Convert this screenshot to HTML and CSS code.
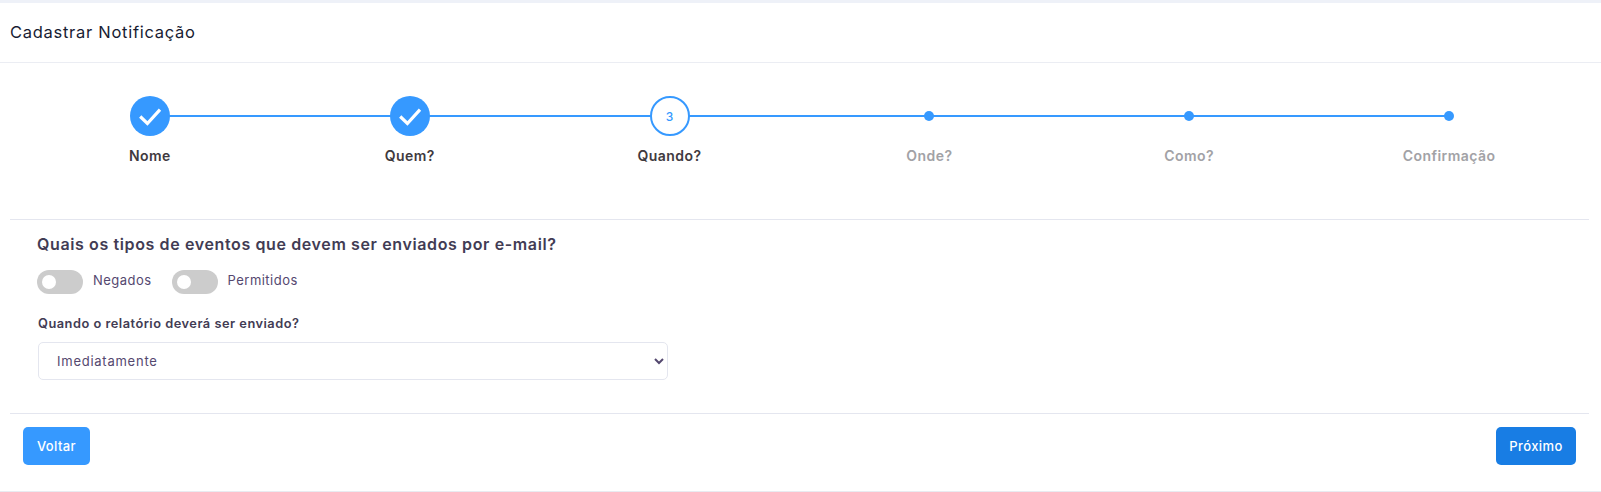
FILE: index.html
```html
<!DOCTYPE html>
<html lang="pt-BR">
<head>
<meta charset="utf-8">
<title>Cadastrar Notificação</title>
<link rel="stylesheet" href="styles.css">
</head>
<body>
<main class="card">
  <header class="card-header"><h1 class="card-title">Cadastrar Notificação</h1></header>
  <section class="card-body">
    <ol class="stepper">
      <li class="step step-done">
        <span class="step-mark"><svg class="check" viewBox="0 0 24 24" width="24" height="24"><path d="M2.2 12.5l7.2 7L22 5.6" fill="none" stroke="#fff" stroke-width="3.2"/></svg></span>
        <span class="step-label">Nome</span>
      </li>
      <li class="step step-done">
        <span class="step-mark"><svg class="check" viewBox="0 0 24 24" width="24" height="24"><path d="M2.2 12.5l7.2 7L22 5.6" fill="none" stroke="#fff" stroke-width="3.2"/></svg></span>
        <span class="step-label">Quem?</span>
      </li>
      <li class="step step-current">
        <span class="step-mark">3</span>
        <span class="step-label">Quando?</span>
      </li>
      <li class="step step-todo">
        <span class="step-mark"><span class="dot"></span></span>
        <span class="step-label">Onde?</span>
      </li>
      <li class="step step-todo">
        <span class="step-mark"><span class="dot"></span></span>
        <span class="step-label">Como?</span>
      </li>
      <li class="step step-todo">
        <span class="step-mark"><span class="dot"></span></span>
        <span class="step-label">Confirmação</span>
      </li>
    </ol>
    <form class="form">
      <h2 class="form-title">Quais os tipos de eventos que devem ser enviados por e-mail?</h2>
      <div class="toggles">
        <label class="toggle"><input type="checkbox"><span class="track"></span><span class="toggle-text">Negados</span></label>
        <label class="toggle"><input type="checkbox"><span class="track"></span><span class="toggle-text">Permitidos</span></label>
      </div>
      <label class="field-label" for="quando">Quando o relatório deverá ser enviado?</label>
      <select class="select" id="quando"><option>Imediatamente</option></select>
    </form>
    <footer class="actions">
      <button type="button" class="btn btn-back">Voltar</button>
      <button type="button" class="btn btn-next">Próximo</button>
    </footer>
  </section>
</main>
</body>
</html>
```
FILE: styles.css
```css
* { box-sizing: border-box; }
html, body { margin: 0; height: 100%; }
body {
  background: #fff;
  border-top: 3px solid #eef1f8;
  font-family: Inter, "Open Sans", sans-serif;
  color: #423c54;
  overflow: hidden;
}
.card { height: 489px; border-bottom: 1px solid #e9ebf1; }
.card-header {
  height: 60px;
  padding: 0 10px 2px;
  display: flex;
  align-items: center;
  border-bottom: 1px solid #ebedf3;
}
.card-title {
  margin: 0;
  font-size: 16.5px;
  font-weight: 400;
  letter-spacing: 0.72px;
  color: #181c32;
}
.card-body { padding: 0 12px 0 10px; }
.stepper {
  list-style: none;
  margin: 0 0 0 10px;
  padding: 33px 0 0;
  width: 1559px;
  height: 156px;
  display: grid;
  grid-template-columns: repeat(6, 1fr);
}
.step {
  position: relative;
  display: flex;
  flex-direction: column;
  align-items: center;
  gap: 10px;
}
.step:not(:last-child)::after {
  content: "";
  position: absolute;
  left: 50%;
  top: 19px;
  width: 100%;
  height: 2px;
  background: #3699ff;
}
.step-mark {
  position: relative;
  z-index: 1;
  width: 40px;
  height: 40px;
  border-radius: 50%;
  display: flex;
  align-items: center;
  justify-content: center;
  font-size: 12px;
  font-weight: 500;
  color: #3699ff;
}
.step-done .step-mark { background: #3699ff; }
.step-current .step-mark { background: #fff; border: 2px solid #3699ff; }
.dot { width: 10px; height: 10px; border-radius: 50%; background: #3699ff; }
.step-label {
  font-size: 14px;
  line-height: 20px;
  font-weight: 600;
  letter-spacing: 0.45px;
  color: #3f3a40;
}
.step-todo .step-label { color: #a2a2a6; }
.form {
  height: 195px;
  padding: 13px 0 0 27px;
  border-top: 1px solid #e4e6ef;
  border-bottom: 1px solid #e4e6ef;
  width: 1579px;
}
.form-title {
  margin: 0;
  font-size: 16px;
  line-height: 22px;
  font-weight: 600;
  letter-spacing: 0.62px;
  color: #423c54;
}
.toggles { display: flex; gap: 20px; margin-top: 15px; height: 24px; }
.toggle { display: flex; align-items: flex-start; gap: 10px; }
.toggle input { display: none; }
.track {
  position: relative;
  width: 46px;
  height: 24px;
  border-radius: 12px;
  background: #cccccc;
}
.track::after {
  content: "";
  position: absolute;
  left: 5px;
  top: 5px;
  width: 14px;
  height: 14px;
  border-radius: 50%;
  background: #fff;
}
.toggle-text {
  margin-top: 1px;
  font-size: 13px;
  line-height: 18px;
  letter-spacing: 0.47px;
  color: #54486f;
}
.field-label {
  display: block;
  margin: 21px 0 0 1px;
  font-size: 12.8px;
  line-height: 18px;
  font-weight: 600;
  letter-spacing: 0.5px;
  color: #423c54;
}
.select {
  display: block;
  margin: 9px 0 0 1px;
  width: 630px;
  height: 38px;
  padding: 0 14px;
  border: 1px solid #e4e6ef;
  border-radius: 5px;
  background: #fff;
  font-family: inherit;
  font-size: 13px;
  letter-spacing: 0.75px;
  color: #54486f;
}
.actions {
  display: flex;
  justify-content: space-between;
  width: 1566px;
  padding: 13px 0 0 13px;
}
.btn {
  height: 38px;
  border: 0;
  border-radius: 5px;
  font-family: inherit;
  font-size: 13px;
  font-weight: 500;
  letter-spacing: 0.4px;
  color: #fff;
}
.btn-back { width: 67px; background: #3699ff; }
.btn-next { width: 80px; background: #187de4; }
```
